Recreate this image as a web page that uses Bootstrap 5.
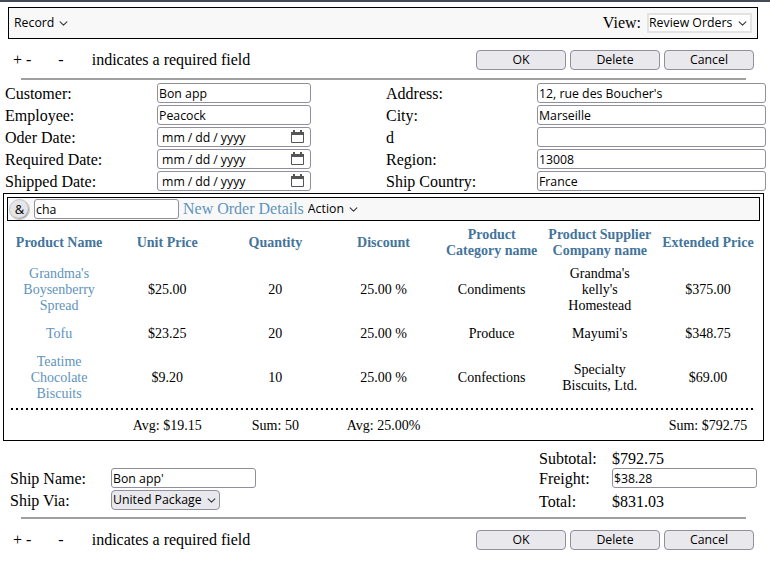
<!DOCTYPE html>
<html lang="en">
<head>
    <meta charset="UTF-8">
    <meta name="viewport" content="width=device-width, initial-scale=1.0">
    <title>Order Details</title>
    <link href="https://cdn.jsdelivr.net/npm/bootstrap@5.3.0/dist/css/bootstrap.min.css" rel="stylesheet">
    <style>
        html, body {
            overflow: hidden;
        }
        body {
            font-family: "Liberation Serif", serif;
            font-size: 16px;
            line-height: 18px;
            color: #000;
            border-top: 2px solid #444a5c;
            height: 561px;
        }
        input, select, button {
            font-family: "Open Sans", "Liberation Sans", sans-serif;
            font-size: 12.3px;
            line-height: 16px;
        }
        .order-toolbar {
            margin: 5px 12px 0 8px;
            height: 32px;
            border: 1px solid #000;
            background: #f8f8f8;
            padding: 0 5px;
        }
        select.form-select {
            min-height: 0;
            color: #000;
            font-size: 12.3px;
            line-height: 16px;
            background-size: 9px 9px;
            border-radius: 0;
        }
        select.plain-select {
            width: auto;
            border: 0;
            background-color: transparent;
            padding: 0 16px 0 0;
            background-position: right 3px center;
        }
        select.view-select {
            width: 105px;
            height: 20px;
            border: 2px solid #e3e3e3;
            background-color: #fff;
            padding: 0 16px 0 0;
            background-position: right 3px center;
            margin-left: 6px;
        }
        .required-row {
            padding: 0 16px 0 13px;
            height: 20px;
            margin-top: 11px;
        }
        .required-note {
            margin-left: 28px;
        }
        .gap-dash {
            margin-left: 27px;
        }
        .act-btn {
            width: 90px;
            height: 20px;
            padding: 0;
            background: #e9e9ed;
            border: 1px solid #8f8f9d;
            border-radius: 4px;
            color: #000;
        }
        .rule-line {
            height: 2px;
            margin: 8px 24px 0 21px;
            background: #a0a0a0;
        }
        .field-grid {
            display: grid;
            grid-template-columns: 152px 154px 75px 151px 229px;
            grid-auto-rows: 20px;
            row-gap: 2px;
            padding: 3px 0 0 5px;
        }
        .field-grid label {
            line-height: 22px;
        }
        .fld {
            height: 20px;
            width: 100%;
            padding: 0 1px;
            border: 1px solid #8f8f9d;
            border-radius: 3px;
            background: #fff;
            color: #000;
        }
        input[type="date"].fld {
            padding: 2px 1px 0 4px;
        }
        .fld::-webkit-datetime-edit-text {
            padding: 0 3px;
        }
        .fld::-webkit-calendar-picker-indicator {
            width: 13px;
            height: 13px;
            padding: 0;
            margin: 0 5px 3px 0;
            background: url("data:image/svg+xml,%3Csvg xmlns='http://www.w3.org/2000/svg' viewBox='0 0 13 13'%3E%3Cpath d='M.5 2.5h12v10H.5z' fill='none' stroke='%23555'/%3E%3Cpath d='M0 2h13v3H0zM2 0h2v2H2zM9 0h2v2H9z' fill='%23555'/%3E%3C/svg%3E") no-repeat center;
        }
        .order-panel {
            margin: 2px 6px 0 3px;
            height: 248px;
            border: 1px solid #000;
            padding: 3px 1px 0;
        }
        .panel-bar {
            height: 24px;
            margin: 0 2px;
            border: 1px solid #000;
            background: #f8f8f8;
            padding-left: 1px;
        }
        .amp-btn {
            width: 21px;
            height: 21px;
            padding: 0;
            border: 1px solid #c4c4c4;
            border-radius: 50%;
            background: #e6e6ea;
            box-shadow: inset -1px -1px 1px #a8a8a8;
            font-size: 13px;
            line-height: 18px;
            color: #000;
        }
        .search-fld {
            width: 145px;
            margin: 0 4px;
        }
        .details-title {
            color: #6094bc;
        }
        select.action-select {
            margin-left: 4px;
        }
        .detail-table {
            width: 100%;
            table-layout: fixed;
            font-size: 14px;
            line-height: 16px;
            text-align: center;
        }
        .detail-table th {
            color: #44749c;
            padding: 6px 0 1px;
            vertical-align: middle;
        }
        .detail-table td {
            padding: 6px 4px;
            vertical-align: middle;
        }
        .detail-table td.prod-name {
            color: #6094bc;
            padding: 6px 12px;
        }
        .detail-table td.supplier {
            padding: 6px 14px;
        }
        .detail-table .dots-row td {
            padding: 0 6px;
        }
        .dots-line {
            height: 2px;
            background: repeating-linear-gradient(90deg, #000 0 2px, transparent 2px 5px);
        }
        .detail-table .sum-row td {
            padding: 8px 0 0;
        }
        .bottom-wrap {
            padding: 7px 13px 0 10px;
        }
        .ship-grid {
            display: grid;
            grid-template-columns: 101px 145px;
            grid-auto-rows: 20px;
            row-gap: 2px;
            margin-top: 20px;
            align-content: start;
        }
        .ship-grid span {
            line-height: 22px;
        }
        .totals-grid {
            display: grid;
            grid-template-columns: 73px 145px;
            grid-template-rows: 20px 23px 20px;
            line-height: 21px;
        }
        .totals-grid input {
            align-self: start;
        }
        .totals-grid .low-cell {
            line-height: 22px;
        }
        select.via-select {
            width: 109px;
            height: 20px;
            padding: 0 16px 0 1px;
            background-color: #e9e9ed;
            background-position: right 3px center;
            border: 1px solid #8f8f9d;
            border-radius: 4px;
        }
        .second-rule {
            margin-top: 6px;
        }
    </style>
</head>
<body>
    <div class="order-toolbar d-flex align-items-center justify-content-between">
        <select class="form-select plain-select"><option>Record</option></select>
        <div class="d-flex align-items-center">
            <span>View:</span>
            <select class="form-select view-select"><option>Review Orders</option></select>
        </div>
    </div>

    <div class="required-row d-flex align-items-center justify-content-between">
        <div>+ -<span class="gap-dash">-</span><span class="required-note">indicates a required field</span></div>
        <div class="d-flex gap-1">
            <button class="act-btn" type="button">OK</button>
            <button class="act-btn" type="button">Delete</button>
            <button class="act-btn" type="button">Cancel</button>
        </div>
    </div>
    <div class="rule-line"></div>

    <div class="field-grid">
        <label>Customer:</label><input class="fld" value="Bon app"><span></span>
        <label>Address:</label><input class="fld" value="12, rue des Boucher's">
        <label>Employee:</label><input class="fld" value="Peacock"><span></span>
        <label>City:</label><input class="fld" value="Marseille">
        <label>Oder Date:</label><input class="fld" type="date"><span></span>
        <label>d</label><input class="fld" value="">
        <label>Required Date:</label><input class="fld" type="date"><span></span>
        <label>Region:</label><input class="fld" value="13008">
        <label>Shipped Date:</label><input class="fld" type="date"><span></span>
        <label>Ship Country:</label><input class="fld" value="France">
    </div>

    <div class="order-panel">
        <div class="panel-bar d-flex align-items-center">
            <button class="amp-btn" type="button">&amp;</button>
            <input class="fld search-fld" value="cha">
            <span class="details-title">New Order Details</span>
            <select class="form-select plain-select action-select"><option>Action</option></select>
        </div>
        <table class="detail-table">
            <thead>
                <tr>
                    <th>Product Name</th>
                    <th>Unit Price</th>
                    <th>Quantity</th>
                    <th>Discount</th>
                    <th>Product<br>Category name</th>
                    <th>Product Supplier<br>Company name</th>
                    <th>Extended Price</th>
                </tr>
            </thead>
            <tbody>
                <tr>
                    <td class="prod-name">Grandma's Boysenberry Spread</td>
                    <td>$25.00</td>
                    <td>20</td>
                    <td>25.00 %</td>
                    <td>Condiments</td>
                    <td class="supplier">Grandma's kelly's Homestead</td>
                    <td>$375.00</td>
                </tr>
                <tr>
                    <td class="prod-name">Tofu</td>
                    <td>$23.25</td>
                    <td>20</td>
                    <td>25.00 %</td>
                    <td>Produce</td>
                    <td class="supplier">Mayumi's</td>
                    <td>$348.75</td>
                </tr>
                <tr>
                    <td class="prod-name">Teatime Chocolate Biscuits</td>
                    <td>$9.20</td>
                    <td>10</td>
                    <td>25.00 %</td>
                    <td>Confections</td>
                    <td class="supplier">Specialty Biscuits, Ltd.</td>
                    <td>$69.00</td>
                </tr>
                <tr class="dots-row"><td colspan="7"><div class="dots-line"></div></td></tr>
                <tr class="sum-row">
                    <td></td>
                    <td>Avg: $19.15</td>
                    <td>Sum: 50</td>
                    <td>Avg: 25.00%</td>
                    <td></td>
                    <td></td>
                    <td>Sum: $792.75</td>
                </tr>
            </tbody>
        </table>
    </div>

    <div class="bottom-wrap d-flex justify-content-between">
        <div class="ship-grid">
            <span>Ship Name:</span><input class="fld" value="Bon app'">
            <span>Ship Via:</span>
            <div><select class="form-select via-select"><option>United Package</option></select></div>
        </div>
        <div class="totals-grid">
            <span>Subtotal:</span><span>$792.75</span>
            <span>Freight:</span><input class="fld" value="$38.28">
            <span class="low-cell">Total:</span><span class="low-cell">$831.03</span>
        </div>
    </div>

    <div class="rule-line second-rule"></div>
    <div class="required-row d-flex align-items-center justify-content-between">
        <div>+ -<span class="gap-dash">-</span><span class="required-note">indicates a required field</span></div>
        <div class="d-flex gap-1">
            <button class="act-btn" type="button">OK</button>
            <button class="act-btn" type="button">Delete</button>
            <button class="act-btn" type="button">Cancel</button>
        </div>
    </div>

    <script src="https://cdn.jsdelivr.net/npm/bootstrap@5.3.0/dist/js/bootstrap.bundle.min.js"></script>
</body>
</html>
